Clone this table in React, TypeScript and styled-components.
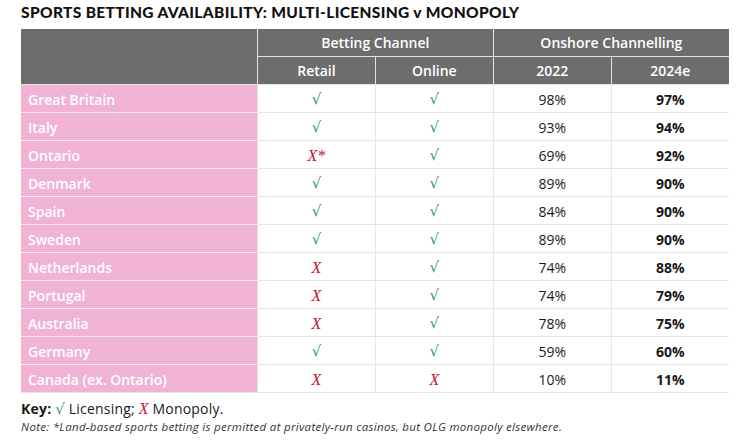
import styled, { createGlobalStyle } from "styled-components";

const GlobalStyle = createGlobalStyle`
  html, body {
    margin: 0;
    padding: 0;
    background: #ffffff;
  }
  body {
    font-family: "Open Sans", Lato, sans-serif;
    color: #1a1a1a;
  }
`;

const Page = styled.div`
  width: 743px;
  height: 442px;
  padding: 3px 0 0 21px;
  box-sizing: border-box;
  overflow: hidden;
`;

const Title = styled.h1`
  margin: 0 0 7px;
  font-family: Lato, "Open Sans", sans-serif;
  font-size: 15.5px;
  line-height: 19px;
  font-weight: 900;
  letter-spacing: 0.35px;
  color: #111;
`;

const Table = styled.table`
  border-collapse: collapse;
  table-layout: fixed;
  width: 708px;
`;

const HeadCell = styled.th<{ $w?: number }>`
  width: ${({ $w }) => ($w ? `${$w}px` : "auto")};
  height: 27px;
  padding: 0;
  background: #6d6d6d;
  color: #ffffff;
  font-size: 14px;
  font-weight: 600;
  text-align: center;
  border: 1px solid #e2e2e2;
  border-top: none;
  &:first-child {
    border-left: none;
  }
  &:last-child {
    border-right: none;
  }
`;

const Row = styled.tr`
  &:last-child td {
    border-bottom: 1px solid #e6e6e6;
  }
`;

const NameCell = styled.td`
  height: 26px;
  padding: 1px 0 0 7px;
  background: #f1b3d4;
  color: #ffffff;
  font-size: 14px;
  line-height: 19px;
  font-weight: 600;
  border-top: 1px solid #fbe3ef;
  border-right: 1px solid #e2e2e2;
`;

const Cell = styled.td<{ $bold?: boolean }>`
  height: 26px;
  padding: 1px 0 0;
  text-align: center;
  font-size: 14px;
  line-height: 19px;
  font-weight: ${({ $bold }) => ($bold ? 700 : 400)};
  color: #1a1a1a;
  border-top: 1px solid #e6e6e6;
  border-right: 1px solid #e6e6e6;
  &:last-child {
    border-right: none;
  }
`;

const Tick = styled.span`
  font-family: "DejaVu Serif", "Liberation Serif", serif;
  font-size: 15px;
  color: #3a9a5c;
`;

const Cross = styled.span`
  font-family: "Liberation Serif", serif;
  font-style: italic;
  font-size: 16px;
  color: #c8102e;
`;

const Key = styled.div`
  margin-top: 6px;
  font-size: 14px;
  line-height: 19px;
  letter-spacing: 0.2px;
  color: #1a1a1a;
`;

const KeyLabel = styled.b`
  font-weight: 700;
`;

const Note = styled.div`
  font-size: 11.5px;
  line-height: 15px;
  font-style: italic;
  letter-spacing: 0.3px;
  color: #333;
`;

type Mark = "y" | "n" | "n*";

const ROWS: { name: string; retail: Mark; online: Mark; y22: string; y24: string }[] = [
  { name: "Great Britain", retail: "y", online: "y", y22: "98%", y24: "97%" },
  { name: "Italy", retail: "y", online: "y", y22: "93%", y24: "94%" },
  { name: "Ontario", retail: "n*", online: "y", y22: "69%", y24: "92%" },
  { name: "Denmark", retail: "y", online: "y", y22: "89%", y24: "90%" },
  { name: "Spain", retail: "y", online: "y", y22: "84%", y24: "90%" },
  { name: "Sweden", retail: "y", online: "y", y22: "89%", y24: "90%" },
  { name: "Netherlands", retail: "n", online: "y", y22: "74%", y24: "88%" },
  { name: "Portugal", retail: "n", online: "y", y22: "74%", y24: "79%" },
  { name: "Australia", retail: "n", online: "y", y22: "78%", y24: "75%" },
  { name: "Germany", retail: "y", online: "y", y22: "59%", y24: "60%" },
  { name: "Canada (ex. Ontario)", retail: "n", online: "n", y22: "10%", y24: "11%" },
];

function MarkCell({ m }: { m: Mark }) {
  if (m === "y") return <Tick>√</Tick>;
  return <Cross>{m === "n*" ? "X*" : "X"}</Cross>;
}

export default function App() {
  return (
    <Page>
      <GlobalStyle />
      <Title>SPORTS BETTING AVAILABILITY: MULTI-LICENSING v MONOPOLY</Title>
      <Table>
        <thead>
          <tr>
            <HeadCell $w={236} rowSpan={2} />
            <HeadCell colSpan={2}>Betting Channel</HeadCell>
            <HeadCell colSpan={2}>Onshore Channelling</HeadCell>
          </tr>
          <tr>
            <HeadCell $w={116}>Retail</HeadCell>
            <HeadCell $w={120}>Online</HeadCell>
            <HeadCell $w={119}>2022</HeadCell>
            <HeadCell $w={117}>2024e</HeadCell>
          </tr>
        </thead>
        <tbody>
          {ROWS.map((r) => (
            <Row key={r.name}>
              <NameCell>{r.name}</NameCell>
              <Cell>
                <MarkCell m={r.retail} />
              </Cell>
              <Cell>
                <MarkCell m={r.online} />
              </Cell>
              <Cell>{r.y22}</Cell>
              <Cell $bold>{r.y24}</Cell>
            </Row>
          ))}
        </tbody>
      </Table>
      <Key>
        <KeyLabel>Key:</KeyLabel> <Tick>√</Tick> Licensing; <Cross>X</Cross> Monopoly.
      </Key>
      <Note>
        Note: *Land-based sports betting is permitted at privately-run casinos, but OLG monopoly elsewhere.
      </Note>
    </Page>
  );
}
